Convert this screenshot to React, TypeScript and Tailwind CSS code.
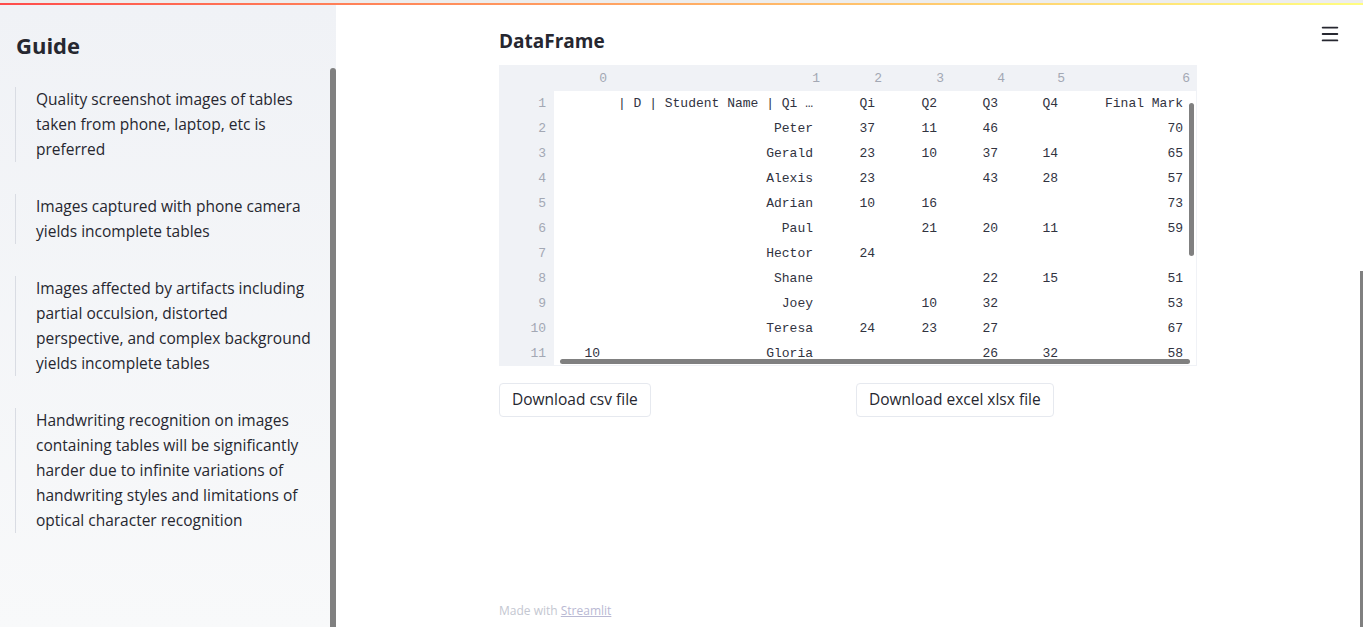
import { Menu } from 'lucide-react';

const guideItems = [
  'Quality screenshot images of tables taken from phone, laptop, etc is preferred',
  'Images captured with phone camera yields incomplete tables',
  'Images affected by artifacts including partial occulsion, distorted perspective, and complex background yields incomplete tables',
  'Handwriting recognition on images containing tables will be significantly harder due to infinite variations of handwriting styles and limitations of optical character recognition',
];

const colWidths = ['w-[56px]', 'w-[213px]', 'w-[62px]', 'w-[62px]', 'w-[61px]', 'w-[60px]', 'w-[125px]'];

const rows: string[][] = [
  ['', '| D | Student Name | Qi …', 'Qi', 'Q2', 'Q3', 'Q4', 'Final Mark'],
  ['', 'Peter', '37', '11', '46', '', '70'],
  ['', 'Gerald', '23', '10', '37', '14', '65'],
  ['', 'Alexis', '23', '', '43', '28', '57'],
  ['', 'Adrian', '10', '16', '', '', '73'],
  ['', 'Paul', '', '21', '20', '11', '59'],
  ['', 'Hector', '24', '', '', '', ''],
  ['', 'Shane', '', '', '22', '15', '51'],
  ['', 'Joey', '', '10', '32', '', '53'],
  ['', 'Teresa', '24', '23', '27', '', '67'],
  ['10', 'Gloria', '', '', '26', '32', '58'],
];

const DataTable = () => (
  <div className="relative mt-[10px] h-[301px] w-[698px] overflow-hidden border border-[#f0f2f6] font-['Liberation_Mono',monospace] text-[13px]">
    <div className="flex h-[25px] bg-[#f0f2f6] leading-[25px] text-[#a3a8b4]">
      <div className="w-[54px] shrink-0" />
      {colWidths.map((w, i) => (
        <div key={i} className={`${w} shrink-0 pr-[3px] text-right`}>
          {i}
        </div>
      ))}
    </div>
    {rows.map((row, r) => (
      <div key={r} className="flex h-[25px] leading-[25px]">
        <div className="w-[54px] shrink-0 bg-[#f0f2f6] pr-[8px] text-right text-[#a3a8b4]">{r + 1}</div>
        {row.map((cell, c) => (
          <div key={c} className={`${colWidths[c]} shrink-0 truncate pr-[10px] text-right text-[#31333f]`}>
            {cell}
          </div>
        ))}
      </div>
    ))}
    <div className="absolute right-[2px] top-[37px] h-[153px] w-[5px] rounded-full bg-[#808080]" />
    <div className="absolute bottom-[1px] left-[60px] h-[5px] w-[630px] rounded-full bg-[#808080]" />
  </div>
);

export default function App() {
  return (
    <div className="flex h-[627px] w-full flex-col overflow-hidden bg-white font-['Open_Sans',sans-serif] text-[#262730]">
      <div className="h-[3px] shrink-0 bg-[#ededed]" />
      <div className="h-[2px] shrink-0 bg-gradient-to-r from-[#ff4b4b] to-[#fffd80]" />

      <div className="flex min-h-0 flex-1">
        <aside className="relative w-[336px] shrink-0 bg-gradient-to-b from-[#f0f2f6] to-[#f8f9fa]">
          <div className="pl-4 pr-[22px]">
            <h2 className="mt-[25px] h-[30px] text-[22px] font-bold leading-[30px]">Guide</h2>
            <div className="mt-[27px] flex flex-col gap-[32px]">
              {guideItems.map((t) => (
                <blockquote key={t} className="ml-[-1px] border-l border-[#d9dce3] pl-[20px] text-[15.5px] leading-[25px]">
                  {t}
                </blockquote>
              ))}
            </div>
          </div>
          <div className="absolute bottom-0 right-0 top-[63px] w-[6px] rounded-t-full bg-[#808080]" />
        </aside>

        <main className="relative flex flex-1 flex-col pr-[3px]">
          <div className="mx-auto w-[698px] pt-[22px]">
            <h3 className="h-[28px] text-[19px] font-bold leading-[28px]">DataFrame</h3>
            <DataTable />
            <div className="mt-[17px] grid grid-cols-2 gap-4">
              <div>
                <button className="h-[34px] rounded border border-[#e6e9ef] bg-white px-[12px] text-[15.5px] text-[#262730]">
                  Download csv file
                </button>
              </div>
              <div>
                <button className="h-[34px] rounded border border-[#e6e9ef] bg-white px-[12px] text-[15.5px] text-[#262730]">
                  Download excel xlsx file
                </button>
              </div>
            </div>
          </div>
          <footer className="mx-auto mt-auto w-[698px] pb-[8px] text-[12px] leading-[16px] text-[#c4c7d1]">
            Made with <span className="underline text-[#b9b9d3]">Streamlit</span>
          </footer>
          <Menu className="absolute right-[22px] top-[18px] h-[22px] w-[22px] text-[#262730]" strokeWidth={2} />
          <div className="absolute bottom-0 right-0 top-[266px] w-[3px] bg-[#808080]" />
        </main>
      </div>
    </div>
  );
}
